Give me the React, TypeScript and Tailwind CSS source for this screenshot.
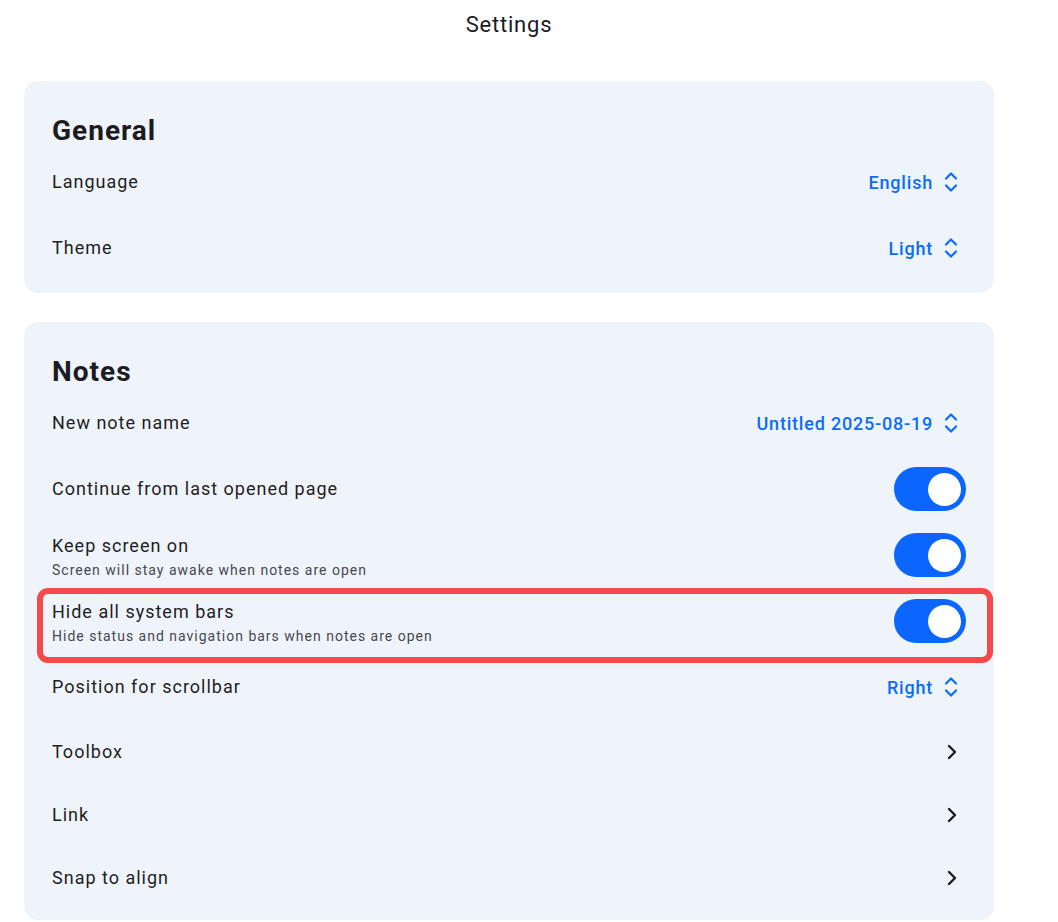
import React from "react";

const font = { fontFamily: "Roboto, 'Noto Sans', Arial, sans-serif" };

function UpDown() {
  return (
    <svg width="14" height="22" viewBox="0 0 14 22" fill="none" className="mr-[8px] shrink-0">
      <path d="M2 7.5 L7 2.5 L12 7.5" stroke="#0a6cff" strokeWidth="2.2" strokeLinecap="round" strokeLinejoin="round" />
      <path d="M2 14.5 L7 19.5 L12 14.5" stroke="#0a6cff" strokeWidth="2.2" strokeLinecap="round" strokeLinejoin="round" />
    </svg>
  );
}

function ChevronRight() {
  return (
    <svg width="10" height="16" viewBox="0 0 10 16" fill="none" className="mr-[9px] shrink-0">
      <path d="M2 2 L8 8 L2 14" stroke="#1c1b1f" strokeWidth="2.4" strokeLinecap="round" strokeLinejoin="round" />
    </svg>
  );
}

function Toggle() {
  return (
    <div className="w-[72px] h-[44px] rounded-full bg-[#0a66ff] flex items-center justify-end pr-[5px] shrink-0">
      <div className="w-[33px] h-[33px] rounded-full bg-white" />
    </div>
  );
}

type Row = {
  title: string;
  sub?: string;
  value?: string;
  kind: "select" | "toggle" | "nav";
  h: string;
  highlight?: boolean;
};

function SettingRow({ row }: { row: Row }) {
  return (
    <div className={`relative flex items-center justify-between ${row.h}`}>
      <div className={row.sub ? "flex flex-col pt-[3px]" : "flex flex-col"}>
        <span className="text-[18px] leading-[24px] tracking-[1px] text-[#1f1e23]">{row.title}</span>
        {row.sub && (
          <span className="mt-[3px] text-[14px] leading-[19px] tracking-[1px] text-[#48474f]">{row.sub}</span>
        )}
      </div>
      {row.kind === "select" && (
        <div className="flex items-center gap-[11px]">
          <span className="text-[18px] font-medium tracking-[0.8px] text-[#0a6cff]">{row.value}</span>
          <UpDown />
        </div>
      )}
      {row.kind === "toggle" && <Toggle />}
      {row.kind === "nav" && <ChevronRight />}
      {row.highlight && (
        <div className="pointer-events-none absolute top-0 -bottom-[9px] -left-[15px] -right-[27px] rounded-[11px] border-[6px] border-[#f44a4a]" />
      )}
    </div>
  );
}

function Card({ title, rows, pb }: { title: string; rows: Row[]; pb: string }) {
  return (
    <div className={`bg-[#eff4fb] rounded-[14px] px-[28px] pt-[31px] ${pb}`}>
      <div className="h-[37px] flex items-center">
        <h2 className="text-[28px] font-bold tracking-[1px] text-[#1c1b1f] leading-none">{title}</h2>
      </div>
      {rows.map((r) => (
        <SettingRow key={r.title} row={r} />
      ))}
    </div>
  );
}

export default function App() {
  const general: Row[] = [
    { title: "Language", value: "English", kind: "select", h: "h-[66px]" },
    { title: "Theme", value: "Light", kind: "select", h: "h-[66px]" },
  ];
  const notes: Row[] = [
    { title: "New note name", value: "Untitled 2025-08-19", kind: "select", h: "h-[66px]" },
    { title: "Continue from last opened page", kind: "toggle", h: "h-[66px]" },
    { title: "Keep screen on", sub: "Screen will stay awake when notes are open", kind: "toggle", h: "h-[66px]" },
    {
      title: "Hide all system bars",
      sub: "Hide status and navigation bars when notes are open",
      kind: "toggle",
      h: "h-[66px]",
      highlight: true,
    },
    { title: "Position for scrollbar", value: "Right", kind: "select", h: "h-[66px]" },
    { title: "Toolbox", kind: "nav", h: "h-[64px]" },
    { title: "Link", kind: "nav", h: "h-[62px]" },
    { title: "Snap to align", kind: "nav", h: "h-[64px]" },
  ];
  return (
    <div style={font} className="w-[1058px] h-[922px] bg-white overflow-hidden">
      <div className="w-[970px] ml-[24px] flex flex-col">
        <div className="h-[48px] flex items-center justify-center">
          <span className="text-[22px] text-[#1c1b1f] tracking-[0.8px]">Settings</span>
        </div>
        <div className="mt-[33px] flex flex-col gap-[29px]">
          <Card title="General" rows={general} pb="pb-[12px]" />
          <Card title="Notes" rows={notes} pb="pb-[10px]" />
        </div>
      </div>
    </div>
  );
}
